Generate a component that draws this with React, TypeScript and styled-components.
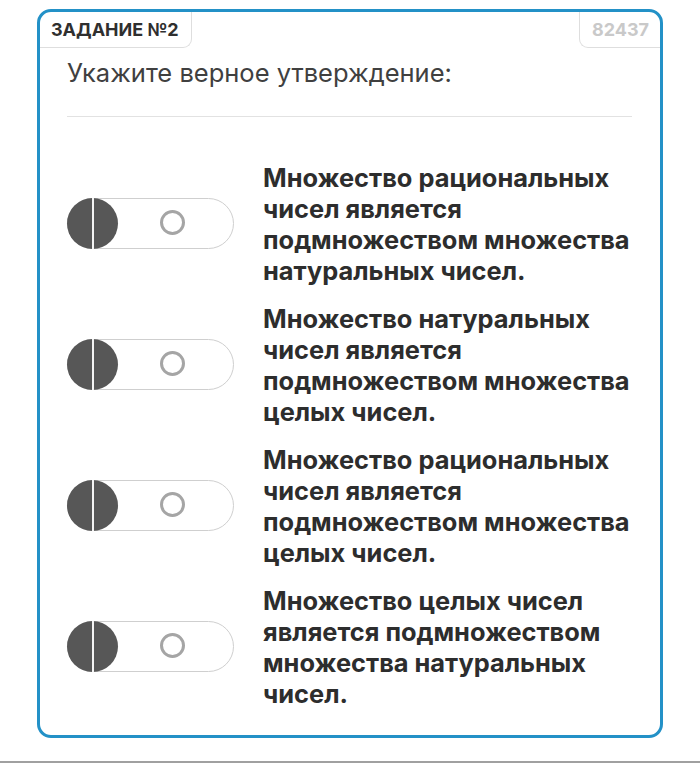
import React from 'react'
import styled, { createGlobalStyle } from 'styled-components'

const font = 'Inter, "Noto Sans", "Liberation Sans", sans-serif'

const GlobalStyle = createGlobalStyle`
  html, body { margin: 0; padding: 0; background: #fff; }
  body { font-family: ${font}; }
`

const Page = styled.div`
  box-sizing: border-box;
  width: 700px;
  height: 763px;
  padding: 9px 37px 0;
  border-bottom: 2px solid #a0a0a0;
`

const Card = styled.section`
  box-sizing: border-box;
  height: 729px;
  border: 3px solid #2391c7;
  border-radius: 14px;
  overflow: hidden;
  display: flex;
  flex-direction: column;
`

const Header = styled.div`
  display: flex;
  justify-content: space-between;
  align-items: flex-start;
`

const Tab = styled.div<{ $side: 'left' | 'right'; $muted?: boolean }>`
  box-sizing: border-box;
  height: 36px;
  padding-left: ${p => (p.$side === 'left' ? '11px' : '12px')};
  padding-right: ${p => (p.$side === 'left' ? '12px' : '11px')};
  display: flex;
  align-items: center;
  border-bottom: 1px solid #dedede;
  ${p => (p.$side === 'left'
    ? 'border-right: 1px solid #dedede; border-bottom-right-radius: 9px;'
    : 'border-left: 1px solid #dedede; border-bottom-left-radius: 9px;')}
  font-size: 18px;
  font-weight: 700;
  color: ${p => (p.$muted ? '#c9c9c9' : '#2f2f2f')};
`

const Body = styled.div`
  padding: 0 28px 0 27px;
  display: flex;
  flex-direction: column;
`

const Question = styled.div`
  margin-top: 9px;
  padding-bottom: 27px;
  border-bottom: 1px solid #e2e2e2;
  font-size: 25.5px;
  line-height: 32px;
  color: #404040;
`

const Options = styled.div`
  display: flex;
  flex-direction: column;
  gap: 17px;
  margin-top: 45px;
`

const Option = styled.label`
  display: flex;
  align-items: center;
  gap: 29px;
  cursor: pointer;
`

const Track = styled.span`
  box-sizing: border-box;
  position: relative;
  flex: none;
  width: 167px;
  height: 51px;
  border: 1.5px solid #cfcfcf;
  border-radius: 26px;
  margin-bottom: 1px;
`

const Knob = styled.span`
  position: absolute;
  left: -1.5px;
  top: -1.5px;
  width: 51px;
  height: 51px;
  border-radius: 50%;
  background: linear-gradient(90deg, #575757 0 49%, #f4f4f4 49% 53%, #575757 53% 100%);
`

const Ring = styled.span`
  position: absolute;
  left: 92px;
  top: 10.5px;
  box-sizing: border-box;
  width: 25px;
  height: 25px;
  border-radius: 50%;
  border: 3px solid #a5a5a5;
`

const Statement = styled.span`
  max-width: 380px;
  font-size: 25.4px;
  line-height: 31px;
  font-weight: 700;
  color: #2d2d2d;
`

const options = [
  'Множество рациональных чисел является подмножеством множества натуральных чисел.',
  'Множество натуральных чисел является подмножеством множества целых чисел.',
  'Множество рациональных чисел является подмножеством множества целых чисел.',
  'Множество целых чисел является подмножеством множества натуральных чисел.',
]

export default function App() {
  return (
    <>
      <GlobalStyle />
      <Page>
        <Card>
          <Header>
            <Tab $side="left">ЗАДАНИЕ №2</Tab>
            <Tab $side="right" $muted>82437</Tab>
          </Header>
          <Body>
            <Question>Укажите верное утверждение:</Question>
            <Options>
              {options.map(text => (
                <Option key={text}>
                  <Track>
                    <Knob />
                    <Ring />
                  </Track>
                  <Statement>{text}</Statement>
                </Option>
              ))}
            </Options>
          </Body>
        </Card>
      </Page>
    </>
  )
}
